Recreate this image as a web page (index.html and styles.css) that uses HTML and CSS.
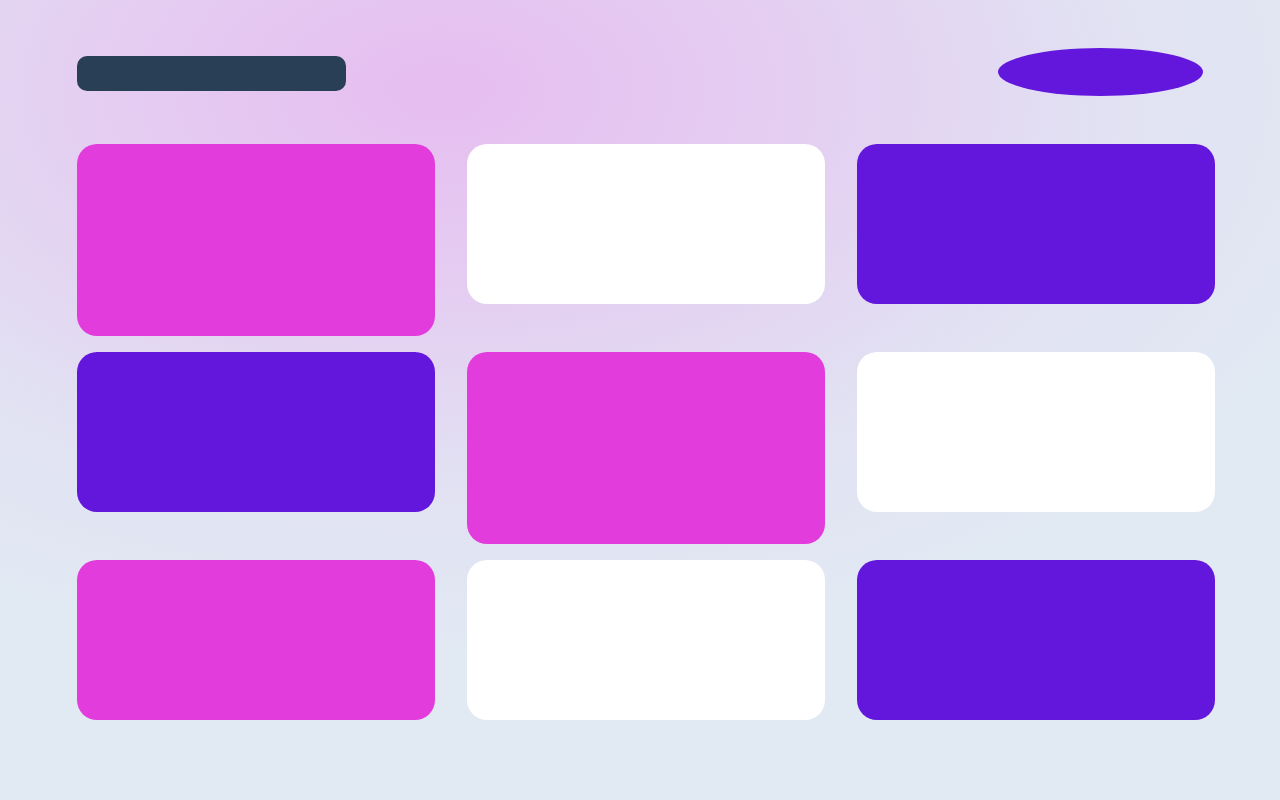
FILE: index.html
```html
<!DOCTYPE html>
<html lang="en">
<head>
<meta charset="utf-8">
<title>Grid</title>
<link rel="stylesheet" href="styles.css">
</head>
<body>
<div class="page">
  <header class="header">
    <div class="title-bar"></div>
    <div class="pill"></div>
  </header>
  <main class="grid">
    <div class="card pink tall"></div>
    <div class="card white"></div>
    <div class="card purple"></div>
    <div class="card purple"></div>
    <div class="card pink tall"></div>
    <div class="card white"></div>
    <div class="card pink"></div>
    <div class="card white"></div>
    <div class="card purple"></div>
  </main>
</div>
</body>
</html>
```

FILE: styles.css
```css
html, body {
  margin: 0;
  padding: 0;
  height: 100%;
}
body {
  font-family: "Liberation Sans", sans-serif;
  background-color: #e1e9f3;
  background-image: radial-gradient(ellipse 950px 560px at 440px 90px, #e6bdf0 0%, rgba(229, 200, 241, 0.85) 35%, rgba(226, 215, 242, 0.45) 70%, rgba(225, 233, 243, 0) 100%);
  background-repeat: no-repeat;
}
.page {
  box-sizing: border-box;
  width: 1280px;
  height: 800px;
  padding: 48px 65px 0 77px;
}
.header {
  display: flex;
  align-items: flex-start;
  justify-content: space-between;
  height: 48px;
  padding-right: 12px;
}
.title-bar {
  margin-top: 8px;
  width: 269px;
  height: 35px;
  border-radius: 10px;
  background: #283f55;
}
.pill {
  width: 205px;
  height: 48px;
  border-radius: 50%;
  background: #6316dc;
}
.grid {
  margin-top: 48px;
  display: grid;
  grid-template-columns: repeat(3, 358px);
  column-gap: 32px;
  row-gap: 16px;
  align-items: start;
}
.card {
  height: 160px;
  border-radius: 20px;
}
.card.tall {
  height: 192px;
}
.pink { background: #e33cdd; }
.purple { background: #6316dc; }
.white { background: #ffffff; }
```
